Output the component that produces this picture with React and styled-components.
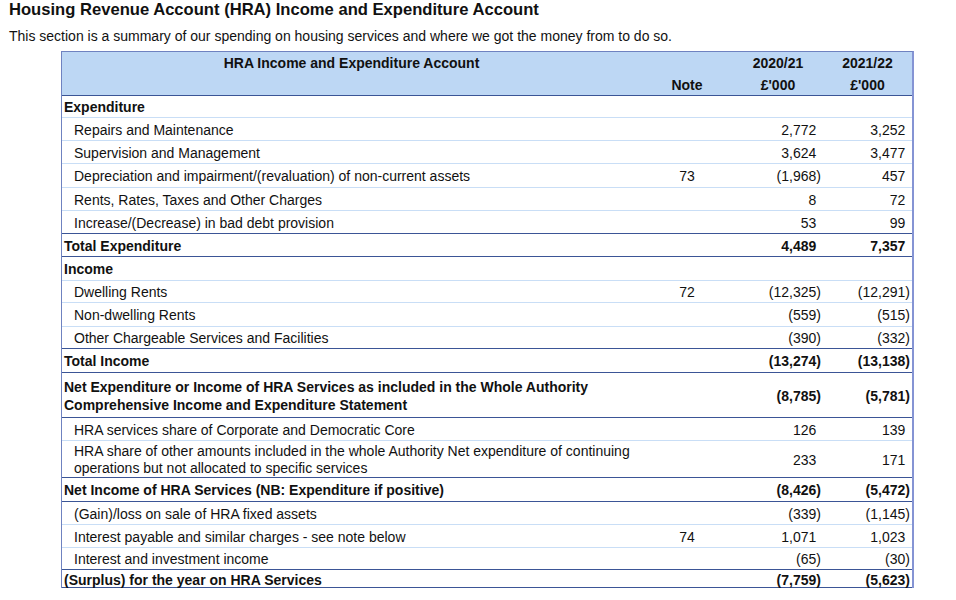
import React from 'react';
import styled, { createGlobalStyle } from 'styled-components';

const GlobalStyle = createGlobalStyle`
  body {
    margin: 0;
    background: #fff;
    font-family: "Liberation Sans", Arial, sans-serif;
    color: #111;
  }
`;

const Page = styled.div`
  padding: 0 0 0 9px;
`;

const Title = styled.h1`
  margin: 0;
  font-size: 16.6px;
  line-height: 19px;
  font-weight: bold;
`;

const Intro = styled.p`
  margin: 9px 0 7px;
  font-size: 14px;
  line-height: 16px;
`;

const Table = styled.div`
  margin-left: 52px;
  width: 850px;
  border-top: 1px solid #6f82c0;
  border-left: 1px solid #6f82c0;
  border-right: 2px solid #8594d4;
  font-size: 14px;
`;

const Row = styled.div`
  display: grid;
  grid-template-columns: 579px 92px 90px 89px;
  box-sizing: border-box;
  height: ${(p) => p.h || 23}px;
  border-bottom: 1px solid ${(p) => (p.dark ? '#3b5596' : '#c9def6')};
  font-weight: ${(p) => (p.bold ? 'bold' : 'normal')};
`;

const HeadRow = styled(Row)`
  height: 44px;
  background: #bdd7f4;
  font-weight: bold;
  line-height: 22px;
`;

const HeadCell = styled.div`
  text-align: center;
  padding-top: ${(p) => (p.low ? 22 : 0)}px;
`;

const Label = styled.div`
  display: flex;
  align-items: center;
  padding-left: ${(p) => (p.bold ? 2 : 12)}px;
  padding-top: 1px;
  line-height: ${(p) => p.lh || 18}px;
  white-space: nowrap;
`;

const NoteCell = styled.div`
  display: flex;
  align-items: center;
  justify-content: center;
  padding-top: 1px;
`;

const Amount = styled.div`
  display: flex;
  align-items: center;
  justify-content: flex-end;
  padding: 1px 2px 0 0;
`;

const Paren = styled.span`
  visibility: hidden;
`;

const fmt = (v) => {
  if (v < 0) return <>({Math.abs(v).toLocaleString('en-GB')})</>;
  return (
    <>
      {v.toLocaleString('en-GB')}
      <Paren>)</Paren>
    </>
  );
};

const rows = [
  { label: 'Expenditure', bold: true, h: 22 },
  { label: 'Repairs and Maintenance', a: 2772, b: 3252 },
  { label: 'Supervision and Management', a: 3624, b: 3477 },
  { label: 'Depreciation and impairment/(revaluation) of non-current assets', note: '73', a: -1968, b: 457, h: 24 },
  { label: 'Rents, Rates, Taxes and Other Charges', a: 8, b: 72 },
  { label: 'Increase/(Decrease) in bad debt provision', a: 53, b: 99, dark: true },
  { label: 'Total Expenditure', bold: true, a: 4489, b: 7357, dark: true },
  { label: 'Income', bold: true, h: 24 },
  { label: 'Dwelling Rents', note: '72', a: -12325, b: -12291, h: 22 },
  { label: 'Non-dwelling Rents', a: -559, b: -515, h: 24 },
  { label: 'Other Chargeable Services and Facilities', a: -390, b: -332, dark: true, h: 22 },
  { label: 'Total Income', bold: true, a: -13274, b: -13138, dark: true, h: 24 },
  {
    label: ['Net Expenditure or Income of HRA Services as included in the Whole Authority', 'Comprehensive Income and Expenditure Statement'],
    bold: true, a: -8785, b: -5781, dark: true, h: 45, lh: 18,
  },
  { label: 'HRA services share of Corporate and Democratic Core', a: 126, b: 139 },
  {
    label: ['HRA share of other amounts included in the whole Authority Net expenditure of continuing', 'operations but not allocated to specific services'],
    a: 233, b: 171, dark: true, h: 37, lh: 17,
  },
  { label: 'Net Income of HRA Services (NB: Expenditure if positive)', bold: true, a: -8426, b: -5472, dark: true, h: 24 },
  { label: '(Gain)/loss on sale of HRA fixed assets', a: -339, b: -1145 },
  { label: 'Interest payable and similar charges - see note below', note: '74', a: 1071, b: 1023 },
  { label: 'Interest and investment income', a: -65, b: -30, dark: true, h: 22 },
  { label: '(Surplus) for the year on HRA Services', bold: true, a: -7759, b: -5623, dark: true, h: 18 },
];

const App = () => (
  <Page>
    <GlobalStyle />
    <Title>Housing Revenue Account (HRA) Income and Expenditure Account</Title>
    <Intro>This section is a summary of our spending on housing services and where we got the money from to do so.</Intro>
    <Table>
      <HeadRow dark>
        <HeadCell>HRA Income and Expenditure Account</HeadCell>
        <HeadCell low>Note</HeadCell>
        <HeadCell>2020/21<br />£'000</HeadCell>
        <HeadCell>2021/22<br />£'000</HeadCell>
      </HeadRow>
      {rows.map((r, i) => (
        <Row key={i} bold={r.bold} dark={r.dark} h={r.h}>
          <Label bold={r.bold} lh={r.lh}>
            <span>
              {Array.isArray(r.label)
                ? r.label.map((l, j) => (
                    <React.Fragment key={j}>
                      {j > 0 && <br />}
                      {l}
                    </React.Fragment>
                  ))
                : r.label}
            </span>
          </Label>
          <NoteCell>{r.note}</NoteCell>
          <Amount>{r.a !== undefined && fmt(r.a)}</Amount>
          <Amount>{r.b !== undefined && fmt(r.b)}</Amount>
        </Row>
      ))}
    </Table>
  </Page>
);

export default App;
